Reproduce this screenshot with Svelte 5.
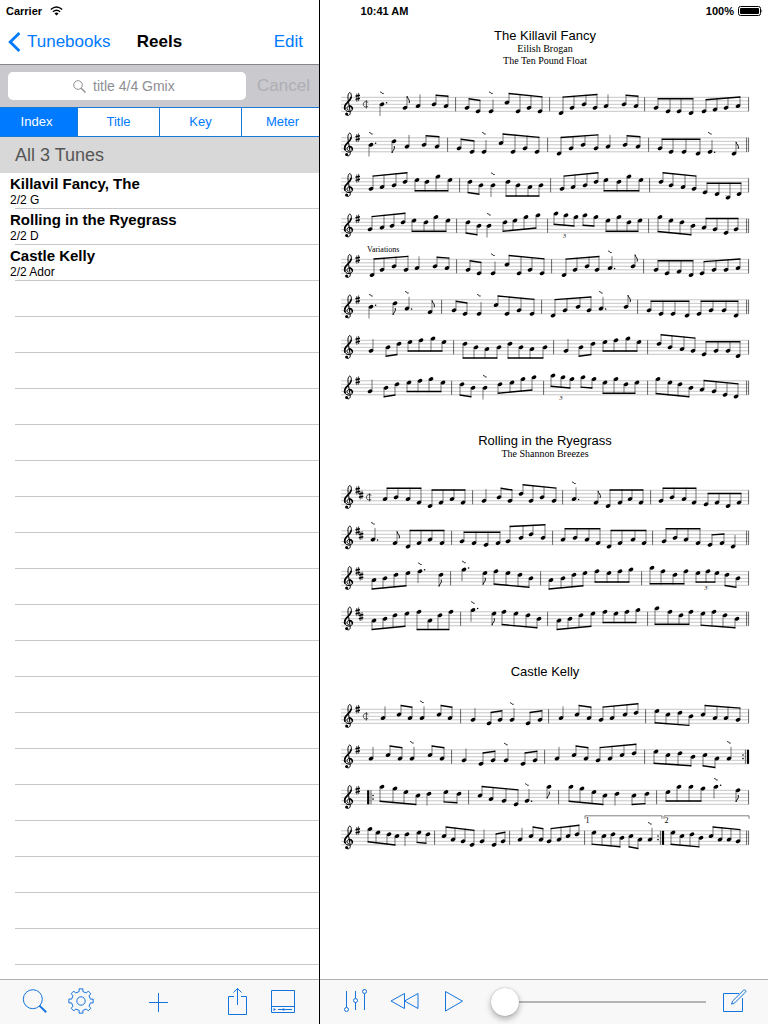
<script lang="ts">
	type Note = { x: number; y: number; roll: boolean; dot: boolean; flag: boolean };
	type Group = { up: boolean; flat: boolean; triplet: boolean; notes: Note[] };
	type Tune = { title: string; meta: string; subtitles: string[]; sharps: number; staves: string[] };

	// Stave notation, tokens split by spaces:
	//   +41B53d   beamed group with stems up (- for down), x position then pitch
	//   = flat beam, / triplet (both right after the direction)
	//   ~ roll, . dotted, ! flag, | bar line, || double, :| and |: repeats
	//   [1:244-322 volta bracket
	const tunes: Tune[] = [
		{
			title: 'The Killavil Fancy',
			meta: '2/2 G',
			subtitles: ['Eilish Brogan', 'The Ten Pound Float'],
			sharps: 1,
			staves: [
				'C -41B~. +64G! +77A +93B105A |115 +126G137E +150E~ +166c177E188G199E |209 +220D231G243B254G +265A +283B295A |304 +=315G327E338E350D +363E374F385G397A |408',
				'-30B~. -53d! +66A +83B96A |107 +118G131E +143E~ +160c172E184G196E |207 +218D230G242B255G +267A +284B297A |308 +=319G330E343E357D +369E~. +393D! ||408',
				'+30G41A53B64d -=76e86d97g109e |119 -129d140B -152B~ -=167d177B189A200B |210 +221G232A244B255d -=265e278d288g300e |309 +320d330B342A353G +=364E376D387B,398D |408',
				'+29G41A51B62d -=73e85d95g107e |116 -127d138B -148B~ -164d174e185g197a |207 -/215b225a235g -244a255g -=267e278g288d299e |308 -319g330e341d352B +=363A374G385E395G ||408',
				'"Variations" +31D41G53B65G +76A +94B106A |116 +127G138E +152E~ +166c178E189G201E |211 +223D234G246B256G +269A~. +292B! |303 +=315G326E338F350D +361E373G385G397A |408',
				'-30B~. -54d! +66A~. +89F! |101 +113G124E +138E~ +155c166E178G191E |201 +212D224G237B248G +260A~. +285B! |297 +=308G320E332E346D +=358E370G383G395D ||408',
				'+30G -47B58d -=69e80f92g103e |113 -=124d135B146A158B -=169d180B191A204B |213 +225G -240B252d -=264e275f287g298e |307 +318d329B341A352G +=363E375G387G397D |408',
				'+29G -45B56d -=68e79f90g102e |111 -121d132B -144B~ -159d171e182g193a |203 -/212b222a231g -242a253g -=264e275g285d296e |307 -317g329e339d350B +361A373G384E395D ||408'
			]
		},
		{
			title: 'Rolling in the Ryegrass',
			meta: '2/2 D',
			subtitles: ['The Shannon Breezes'],
			sharps: 2,
			staves: [
				'C +=44A55B67A78F +=89D100F111A122F |132 +143G +158B169G +180d190G201B213G |222 +233A~. +255F! +=267D279F289A300F |310 +=320G331B343A353F +=365E376F387D398F |408',
				'+32A~. +54F! +=67D78F89A101F |111 +=121G133F145E157F +167G180B190d202B |212 +=222A234B246A257F +=268D279F292A303F |312 +=323G334B345A357F +369E381F +392D ||408',
				'-33A44B55d67e -79f~. -100d! |110 -123g~. -144e! -155f167e179d190B |200 -210A222B233d244e -=256f268e279f290g |301 -=311a322f334d345f -/=357e367f376e -386d397B |408',
				'-33A44B54d66e -=78f89A99d110f |120 -132g~. -153e! -163f175e187d198B |207 -218A229B240d252e -=264f275e286f297g |307 -=316a329f340d350f -362e373f384d396B ||408'
			]
		},
		{
			title: 'Castle Kelly',
			meta: '2/2 Ador',
			subtitles: [],
			sharps: 1,
			staves: [
				'C +42A +58c69A +81A~ +98c109A |120 +132G +148E159G +171G~ +187E199G |208 +220A +236c248A +260G271A284c295d |305 -316e327c339d350B +362c374A385A397G |408',
				'+30A +47c59A +71A~ +89c101A |111 +123G +140E152G +165G~ +182E194G |204 +216A +233c245A +257G269A281c293d |304 -315e327c339d352B -364c376A +388A~ :|408',
				'|:26 -41a54g65e77c -88d -105e118d |128 +139c150A163G175E +186G~. -208a! |218 -230a241g253e264c -276d -293c306d |316 -=327e338a350a362g -375a~. -397f! |408',
				'-29g37e48d56c -66d -78e87d |94 +103c112A122G131E +141G +153E162G |169 +179A +190c200A +208G218A227c236d |244 [1:244-321 -253e263c272d281B -290c299A +309A~ :|323 [2:323-408 -332e341c351d360B +370c379A388A397G ||408'
			]
		}
	];

	const PITCHES = ['b', 'a', 'g', 'f', 'e', 'd', 'c', 'B', 'A', 'G', 'F', 'E', 'D', 'C', 'B,'];
	const GAP = 3.5;
	const STAVE_PITCH = 40.5;
	const STEM = 11.7;
	const MIN_STEM = 9.7;
	const filters = ['Index', 'Title', 'Key', 'Meter'];
	const listed = [
		{ name: 'Killavil Fancy, The', meta: tunes[0].meta },
		{ name: 'Rolling in the Ryegrass', meta: tunes[1].meta },
		{ name: 'Castle Kelly', meta: tunes[2].meta }
	];

	let activeFilter = $state('Index');
	let query = $state('');
	let position = $state(0);

	function parseGroup(token: string): Group {
		const notes: Note[] = [];
		for (const m of token.matchAll(/(\d+)([A-Ga-g],?)([~.!]*)/g)) {
			notes.push({
				x: Number(m[1]),
				y: ((PITCHES.indexOf(m[2]) - 3) * GAP) / 2,
				roll: m[3].includes('~'),
				dot: m[3].includes('.'),
				flag: m[3].includes('!')
			});
		}
		return { up: token[0] === '+', flat: token.includes('='), triplet: token.includes('/'), notes };
	}

	function layoutGroup(group: Group) {
		const { notes, up } = group;
		const dir = up ? -1 : 1;
		const first = notes[0];
		const last = notes[notes.length - 1];
		const beamed = notes.length > 1;
		let slope = 0;
		if (beamed && !group.flat) {
			const rise = Math.max(-3.3, Math.min(3.3, (last.y - first.y) * 0.5));
			slope = rise / (last.x - first.x);
		}
		const reach = beamed ? MIN_STEM : STEM;
		const ends = notes.map((n) => n.y + dir * reach - slope * (n.x - first.x));
		const base = up ? Math.min(...ends) : Math.max(...ends);
		const stems = notes.map((n) => ({
			...n,
			sx: n.x + (up ? 2 : -2),
			end: base + slope * (n.x - first.x)
		}));
		return { ...group, stems, beamed, dir };
	}

	function rollY(note: { y: number; end: number }, up: boolean) {
		return Math.min(-4, up ? note.end - 4 : note.y - 7);
	}

	function parseStave(source: string) {
		const tokens = source.split(' ');
		return {
			cut: tokens.includes('C'),
			text: tokens.find((t) => t.startsWith('"'))?.replaceAll('"', ''),
			groups: tokens.filter((t) => /^[+-]/.test(t)).map(parseGroup).map(layoutGroup),
			bars: tokens.flatMap((t) => {
				const m = t.match(/^(:\||\|\||\|:|\|)(\d+)$/);
				return m ? [{ kind: m[1], x: Number(m[2]) }] : [];
			}),
			voltas: tokens.flatMap((t) => {
				const m = t.match(/^\[(\d):(\d+)-(\d+)$/);
				return m ? [{ label: m[1], from: Number(m[2]), to: Number(m[3]) }] : [];
			})
		};
	}

	function gearPath(teeth: number, inner: number, outer: number) {
		const points: string[] = [];
		for (let i = 0; i < teeth; i++) {
			const steps = [[-0.25, inner], [-0.2, outer], [0.2, outer], [0.25, inner]];
			for (const [offset, radius] of steps) {
				const angle = ((i + offset) / teeth) * Math.PI * 2;
				points.push(`${(13 + Math.sin(angle) * radius).toFixed(2)} ${(13 - Math.cos(angle) * radius).toFixed(2)}`);
			}
		}
		return `M${points.join('L')}Z`;
	}
</script>

<svelte:head>
	<title>Reels</title>
</svelte:head>

<div class="app">
	<div class="status-bar">
		<div class="carrier">
			<span>Carrier</span>
			<svg width="13" height="10" viewBox="0 0 13 10" aria-hidden="true">
				<path d="M.8 3.6Q6.5 -1.6 12.2 3.6M2.9 5.8Q6.5 2.6 10.1 5.8" fill="none" stroke="#000" stroke-width="1.4" />
				<path d="M4.5 7.4Q6.5 5.6 8.5 7.4L6.5 9.5Z" />
			</svg>
		</div>
		<span>10:41 AM</span>
		<div class="battery">
			<span>100%</span>
			<svg width="25" height="10" viewBox="0 0 25 10" aria-hidden="true">
				<rect x=".5" y=".5" width="22" height="9" rx="2" fill="none" stroke="#000" />
				<rect x="2" y="2" width="19" height="6" rx="1" />
				<path d="M23.5 3.2Q25 5 23.5 6.8Z" />
			</svg>
		</div>
	</div>

	<aside class="sidebar">
		<nav class="nav-bar">
			<button class="back">
				<svg width="13" height="20" viewBox="0 0 13 20" aria-hidden="true">
					<path d="M11.4 1L2.2 10L11.4 19" fill="none" stroke="currentColor" stroke-width="2.8" />
				</svg>
				Tunebooks
			</button>
			<h1>Reels</h1>
			<button class="edit">Edit</button>
		</nav>

		<div class="search-bar">
			<label class="search-field">
				<svg width="13" height="13" viewBox="0 0 13 13" aria-hidden="true">
					<circle cx="5" cy="5" r="4.3" fill="none" stroke="#8e8e93" />
					<path d="M8.2 8.2L12.5 12.5" stroke="#8e8e93" stroke-width="1.4" />
				</svg>
				<input type="text" aria-label="Search tunes" placeholder="title 4/4 Gmix" bind:value={query} />
			</label>
			<button class="cancel" disabled={!query} onclick={() => (query = '')}>Cancel</button>
		</div>

		<div class="segments">
			{#each filters as filter}
				<button class="segment" class:active={activeFilter === filter} onclick={() => (activeFilter = filter)}>
					{filter}
				</button>
			{/each}
		</div>

		<h2 class="section-header">All 3 Tunes</h2>

		<ul class="tune-list">
			{#each listed as tune}
				<li>
					<button class="tune">
						<span class="tune-name">{tune.name}</span>
						<span class="tune-meta">{tune.meta}</span>
					</button>
				</li>
			{/each}
			{#each Array(19) as _}
				<li class="blank" aria-hidden="true"></li>
			{/each}
		</ul>

		<div class="toolbar toolbar-left">
			<div class="tool-group">
				<button class="tool" aria-label="Search">
					<svg width="26" height="26" viewBox="0 0 26 26">
						<circle cx="10.8" cy="11.2" r="9.5" />
						<path d="M17.4 17.6L24.2 24.2" stroke-width="2" />
					</svg>
				</button>
				<button class="tool" aria-label="Settings">
					<svg width="26" height="26" viewBox="0 0 26 26">
						<circle cx="13" cy="13" r="4.2" />
						<path d={gearPath(8, 9.6, 12.3)} />
					</svg>
				</button>
			</div>
			<button class="tool" aria-label="Add tune">
				<svg width="26" height="26" viewBox="0 0 26 26">
					<path d="M12.5 5V24M3 14.5H22" />
				</svg>
			</button>
			<div class="tool-group">
				<button class="tool" aria-label="Share">
					<svg width="26" height="28" viewBox="0 0 26 28">
						<path d="M10 9.5H4.5V27.5H22.5V9.5H17M13.5 18V1.5M9.5 5.5L13.5 1.5L17.5 5.5" />
					</svg>
				</button>
				<button class="tool" aria-label="Player panel">
					<svg width="26" height="26" viewBox="0 0 26 26">
						<path d="M1.5 2.5H24.5V24.5H1.5ZM1.5 18.5H24.5M8 21.5H22" />
						<path d="M3.5 20L6 21.5L3.5 23ZM12.5 20.5h2v2h-2z" fill="currentColor" stroke="none" />
					</svg>
				</button>
			</div>
		</div>
	</aside>

	<main class="content">
		<div class="score">
			{#each tunes as tune}
				<article class="sheet">
					<h3>{tune.title}</h3>
					{#each tune.subtitles as subtitle}
						<p>{subtitle}</p>
					{/each}
					<svg class="music" viewBox="0 0 408 {tune.staves.length * STAVE_PITCH + 42}" role="img" aria-label={tune.title}>
						{#each tune.staves.map(parseStave) as stave, row}
							<g transform="translate(0 {30.3 + row * STAVE_PITCH})">
								{#each [0, 1, 2, 3, 4] as line}
									<path class="line" d="M0 {line * GAP}H408" />
								{/each}

								<!-- clef and key signature -->
								<g class="clef">
									<path
										d="M7.8 12.9C5.4 12.6 5.3 9.2 7.9 8.7C10.6 8.3 12 10.6 11.3 12.4C10.3 14.9 6 15 4.2 12.4C2.4 9.5 4.6 6.7 6.8 4.8C9 2.7 10.8 .8 10.3 -2.2C9.8 -5.4 8 -5.6 7.2 -2.6C6.7 -.4 7 1.4 7.5 4.4L9.2 14.6C9.6 17.6 7.4 19 5.4 17.4"
										stroke-width="1"
									/>
									<path d="M4.2 12.4C2.6 9.5 4.6 6.9 6.8 4.9C8.6 3.2 9.9 1.6 10.2 -.4M7.9 8.8C10.3 8.4 11.8 10.4 11.2 12.2" stroke-width="1.7" />
									<circle cx="5.6" cy="16.6" r="1.5" />
								</g>
								{#each Array(tune.sharps) as _, i}
									<g transform="translate({16.6 + i * 3.4} {i * 4.8})">
										<path class="sharp-stem" d="M-.8 -3.8V4.4M1 -4.4V3.8" />
										<path class="sharp-bar" d="M-2.1 -1L2.3 -2.1M-2.1 2.1L2.3 1" />
									</g>
								{/each}
								{#if stave.cut}
									<path
										class="cut"
										d="M2.6 -1.6C1.8 -3 -2.4 -3.6 -2.4 0C-2.4 3.6 1.8 3 2.6 1.6M.7 -4.2V4.2"
										transform="translate({21.5 + tune.sharps * 3.2} 7)"
									/>
								{/if}
								{#if stave.text}
									<text x="26" y="-7" class="annotation">{stave.text}</text>
								{/if}

								{#each stave.bars as bar}
									{#if bar.kind === '|:'}
										<path d="M{bar.x + 1.2} 0V14" stroke-width="2.2" class="bar" />
										<path d="M{bar.x + 4} 0V14" class="bar" />
										<circle cx={bar.x + 6} cy="5.2" r=".8" />
										<circle cx={bar.x + 6} cy="8.8" r=".8" />
									{:else if bar.kind === ':|'}
										<path d="M{bar.x - 1} 0V14" stroke-width="2.2" class="bar" />
										<path d="M{bar.x - 3.6} 0V14" class="bar" />
										<circle cx={bar.x - 6} cy="5.2" r=".8" />
										<circle cx={bar.x - 6} cy="8.8" r=".8" />
									{:else}
										<path d="M{bar.x - 0.4} 0V14" class="bar" />
										{#if bar.kind === '||'}
											<path d="M{bar.x - 2.4} 0V14" class="bar" />
										{/if}
									{/if}
								{/each}

								{#each stave.voltas as volta}
									<path d="M{volta.from} -12V-15H{volta.to}V-12" class="volta" />
									<text x={volta.from + 0.5} y="-8" class="annotation">{volta.label}</text>
								{/each}

								{#each stave.groups as group}
									{@const head = group.stems[0]}
									{@const tail = group.stems[group.stems.length - 1]}
									{#each group.stems as note}
										<ellipse cx={note.x} cy={note.y} rx="2.5" ry="1.8" transform="rotate(-24 {note.x} {note.y})" />
										<path class="stem" d="M{note.sx} {note.y}V{note.end}" />
										{#if note.y > 16}
											<path class="line" d="M{note.x - 3} 17.5h6" />
										{/if}
										{#if note.dot}
											<circle cx={note.x + 4.6} cy={note.y + (group.up ? 0.4 : -1.6)} r=".8" />
										{/if}
										{#if note.flag}
											<path
												class="flag"
												d="M0 0C.2 2.6 3.4 3.4 2.2 7"
												transform="translate({note.sx} {note.end}) scale(1 {-group.dir})"
											/>
										{/if}
										{#if note.roll}
											<path class="roll" d="M-1.8 -1.2q.8 -.4 1.4 .6t2 .8" transform="translate({note.x} {rollY(note, group.up)})" />
										{/if}
									{/each}
									{#if group.beamed}
										<path
											class="beam"
											d="M{head.sx - 0.3} {head.end}L{tail.sx + 0.3} {tail.end}v{-group.dir * 1.4}L{head.sx - 0.3} {head.end - group.dir * 1.4}Z"
										/>
									{/if}
									{#if group.triplet}
										<text class="tuplet" x={(head.x + tail.x) / 2 - 3} y={Math.max(head.end, 13) + 6}>3</text>
									{/if}
								{/each}
							</g>
						{/each}
					</svg>
				</article>
			{/each}
		</div>

		<div class="toolbar toolbar-right">
			<button class="tool" aria-label="Mixer">
				<svg width="26" height="26" viewBox="0 0 26 26">
					<path d="M4.5 3V19.5M13.5 3V10.5M13.5 14.5V22M22.5 5.5V22" />
					<circle cx="4.5" cy="21.5" r="2" />
					<circle cx="13.5" cy="12.5" r="2" />
					<circle cx="22.5" cy="3.5" r="2" />
				</svg>
			</button>
			<button class="tool" aria-label="Rewind">
				<svg width="30" height="26" viewBox="0 0 30 26">
					<path d="M15.5 5.5V20.5L2 13ZM29 5.5V20.5L15.5 13Z" />
				</svg>
			</button>
			<button class="tool" aria-label="Play">
				<svg width="26" height="26" viewBox="0 0 26 26">
					<path d="M5.5 3.5V23L22.5 13.2Z" />
				</svg>
			</button>
			<input class="scrubber" type="range" min="0" max="100" aria-label="Playback position" bind:value={position} />
			<button class="tool" aria-label="Edit tune">
				<svg width="26" height="26" viewBox="0 0 26 26">
					<path d="M17 5.5H1.5V23.5H20.5V10" />
					<path d="M9.5 16.2L10.6 13L21.6 2.2Q22.8 1.4 23.6 2.4Q24.4 3.2 23.4 4.2L12.6 15Z" />
				</svg>
			</button>
		</div>
	</main>
</div>

<style>
	:global(body) {
		background: #fff;
		font-family: 'Liberation Sans', Arial, sans-serif;
	}

	button,
	input {
		font: inherit;
		color: inherit;
		background: none;
		border: 0;
		padding: 0;
		margin: 0;
	}

	h1,
	h2,
	h3,
	p,
	ul {
		margin: 0;
		padding: 0;
	}

	svg {
		display: block;
		flex: none;
	}

	.app {
		--blue: #007aff;
		--icon: #1474dc;
		position: relative;
		display: flex;
		min-height: 100vh;
		color: #000;
	}

	/* ===================== STATUS BAR ===================== */
	.status-bar {
		position: absolute;
		top: 0;
		left: 0;
		right: 0;
		display: grid;
		grid-template-columns: 1fr auto 1fr;
		align-items: center;
		height: 22px;
		padding: 0 5px 0 6px;
		font-size: 11px;
		font-weight: 700;
	}

	.carrier,
	.battery {
		display: flex;
		align-items: center;
		gap: 8px;
	}

	.battery {
		justify-content: flex-end;
		gap: 4px;
	}

	/* ===================== SIDEBAR ===================== */
	.sidebar {
		display: flex;
		flex-direction: column;
		box-sizing: border-box;
		width: 320px;
		flex: none;
		padding-top: 20px;
		border-right: 1px solid #000;
		overflow: hidden;
	}

	.nav-bar {
		display: grid;
		grid-template-columns: 1fr auto 1fr;
		align-items: center;
		height: 44px;
		padding: 0 16px;
		border-bottom: 1px solid #86868b;
		font-size: 17px;
	}

	.nav-bar h1 {
		font-size: 17px;
		font-weight: 700;
	}

	.back {
		display: flex;
		align-items: center;
		gap: 6px;
		margin-left: -8px;
		color: var(--blue);
	}

	.edit {
		justify-self: end;
		color: var(--blue);
	}

	.search-bar {
		display: flex;
		align-items: center;
		gap: 11px;
		height: 42px;
		padding: 0 9px 0 8px;
		background: #c9c9ce;
	}

	.search-field {
		display: flex;
		flex: 1;
		align-items: center;
		justify-content: center;
		gap: 7px;
		height: 28px;
		border-radius: 5px;
		background: #fff;
	}

	.search-field input {
		width: 88px;
		font-size: 14px;
		outline: none;
	}

	.search-field input::placeholder {
		color: #8e8e93;
		opacity: 1;
	}

	.cancel {
		font-size: 17px;
		color: #aeaeb4;
	}

	.segments {
		display: flex;
		height: 28px;
		margin: 0 -4px;
		border-top: 1px solid #1a78d8;
		border-bottom: 1px solid #1a78d8;
	}

	.segment {
		flex: 1;
		padding-bottom: 2px;
		font-size: 13px;
		color: var(--blue);
	}

	.segment + .segment {
		border-left: 1px solid #1a78d8;
	}

	.segment.active {
		background: var(--blue);
		color: #fff;
	}

	.section-header {
		padding: 0 15px;
		line-height: 36px;
		font-size: 18px;
		font-weight: 400;
		color: #555;
		background: #d8d8d8;
	}

	.tune-list {
		flex: 1;
		list-style: none;
	}

	.tune-list li {
		display: flex;
		box-sizing: border-box;
		height: 36px;
		background: linear-gradient(#c8c7cc, #c8c7cc) 15px 100% / 100% 1px no-repeat;
	}

	.tune {
		flex: 1;
		padding: 0 10px;
		text-align: left;
	}

	.tune-name,
	.tune-meta {
		display: block;
	}

	.tune-name {
		font-size: 15px;
		font-weight: 700;
		line-height: 18px;
	}

	.tune-meta {
		font-size: 12px;
		line-height: 14px;
	}

	/* ===================== TOOLBARS ===================== */
	.toolbar {
		display: flex;
		align-items: center;
		height: 44px;
		border-top: 1px solid #b2b2b2;
		background: #f8f8f8;
	}

	.toolbar-left {
		justify-content: space-between;
		padding: 0 13px 0 12px;
	}

	.toolbar-right {
		padding: 0 9px 0 10px;
	}

	.tool-group {
		display: flex;
	}

	.tool {
		display: flex;
		align-items: center;
		justify-content: center;
		box-sizing: border-box;
		width: 46px;
		height: 44px;
		padding-bottom: 2px;
		color: var(--icon);
	}

	.toolbar-right .tool {
		width: 49px;
	}

	.tool svg {
		fill: none;
		stroke: currentColor;
		stroke-width: 1;
	}

	.scrubber {
		appearance: none;
		flex: 1;
		min-width: 0;
		height: 30px;
		margin: 0 4px 0 14px;
		background: linear-gradient(#b5b5b5, #b5b5b5) center / 100% 2px no-repeat;
	}

	.scrubber::-webkit-slider-thumb {
		appearance: none;
		width: 28px;
		height: 28px;
		border-radius: 50%;
		background: #fff;
		box-shadow: 0 0 1px rgba(0, 0, 0, 0.4), 0 3px 6px rgba(0, 0, 0, 0.3);
	}

	/* ===================== SCORE ===================== */
	.content {
		display: flex;
		flex: 1;
		flex-direction: column;
		min-width: 0;
	}

	.score {
		flex: 1;
		padding: 28px 19px 0 21px;
	}

	.sheet {
		text-align: center;
	}

	.sheet h3 {
		font-size: 13px;
		font-weight: 400;
		line-height: 15px;
	}

	.sheet p {
		font-family: 'Liberation Serif', 'Times New Roman', serif;
		font-size: 10px;
		line-height: 12px;
	}

	.music {
		width: 100%;
		overflow: visible;
		text-align: left;
	}

	.line {
		stroke: #8a8a8a;
		stroke-width: 0.5;
	}

	.bar {
		stroke: #000;
	}

	.bar:not([stroke-width]) {
		stroke-width: 0.6;
	}

	.stem {
		stroke: #222;
		stroke-width: 0.6;
	}

	.clef path,
	.flag,
	.roll,
	.cut,
	.volta {
		fill: none;
		stroke: #000;
	}

	.flag,
	.roll {
		stroke-width: 1;
	}

	.cut {
		stroke: #222;
		stroke-width: 0.8;
	}

	.volta {
		stroke-width: 0.5;
	}

	.sharp-stem {
		stroke: #000;
		stroke-width: 0.7;
	}

	.sharp-bar {
		stroke: #000;
		stroke-width: 1.4;
	}

	.annotation,
	.tuplet {
		font-family: 'Liberation Serif', 'Times New Roman', serif;
		font-size: 8px;
		text-anchor: start;
	}

	.tuplet {
		font-size: 6px;
		font-style: italic;
	}
</style>
